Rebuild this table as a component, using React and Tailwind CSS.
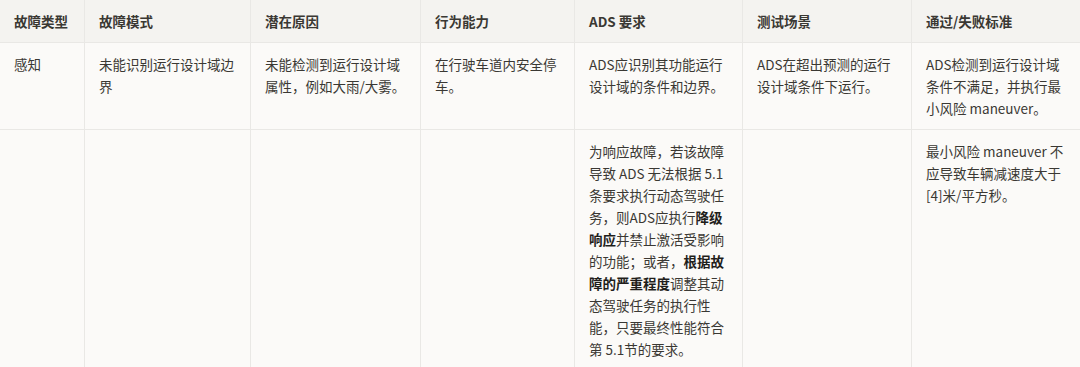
import React from 'react';

// Column widths measured from the reference (total 1080)
const cols = 'grid-cols-[85px_166px_170px_154px_168px_169px_168px]';

const headers = ['故障类型', '故障模式', '潜在原因', '行为能力', 'ADS 要求', '测试场景', '通过/失败标准'];

const rows = [
    [
        '感知',
        '未能识别运行设计域边界',
        '未能检测到运行设计域属性，例如大雨/大雾。',
        '在行驶车道内安全停车。',
        'ADS应识别其功能运行设计域的条件和边界。',
        'ADS在超出预测的运行设计域条件下运行。',
        'ADS检测到运行设计域条件不满足，并执行最小风险 maneuver。',
    ],
    [
        '',
        '',
        '',
        '',
        <>
            为响应故障，若该故障导致 ADS 无法根据 5.1 条要求执行动态驾驶任务，则ADS应执行
            <b className="font-bold text-[#1f1e1b]">降级响应</b>
            并禁止激活受影响的功能；或者，
            <b className="font-bold text-[#1f1e1b]">根据故障的严重程度</b>
            调整其动态驾驶任务的执行性能，只要最终性能符合第 5.1节的要求。
        </>,
        '',
        '最小风险 maneuver 不应导致车辆减速度大于[4]米/平方秒。',
    ],
];

const Cell = ({ children, last, header }) => (
    <div
        className={`px-[14px] py-[10px] border-b border-[#e9e8e5] ${last ? '' : 'border-r'} ${
            header ? 'bg-[#f4f3f0] font-semibold' : 'bg-[#fbfaf8]'
        }`}
    >
        {children}
    </div>
);

const App = () => {
    return (
        <div
            className="w-[1080px] h-[367px] overflow-hidden bg-[#fbfaf8] text-[#3a3833] text-[13.5px] leading-[22px]"
            style={{ fontFamily: '"Noto Sans CJK SC", "Noto Sans", sans-serif' }}
        >
            <div className={`grid ${cols}`}>
                {headers.map((h, i) => (
                    <Cell key={h} header last={i === headers.length - 1}>
                        {h}
                    </Cell>
                ))}
                {rows.map((row, r) =>
                    row.map((c, i) => (
                        <Cell key={`${r}-${i}`} last={i === row.length - 1}>
                            {c}
                        </Cell>
                    ))
                )}
            </div>
        </div>
    );
};

export default App;
